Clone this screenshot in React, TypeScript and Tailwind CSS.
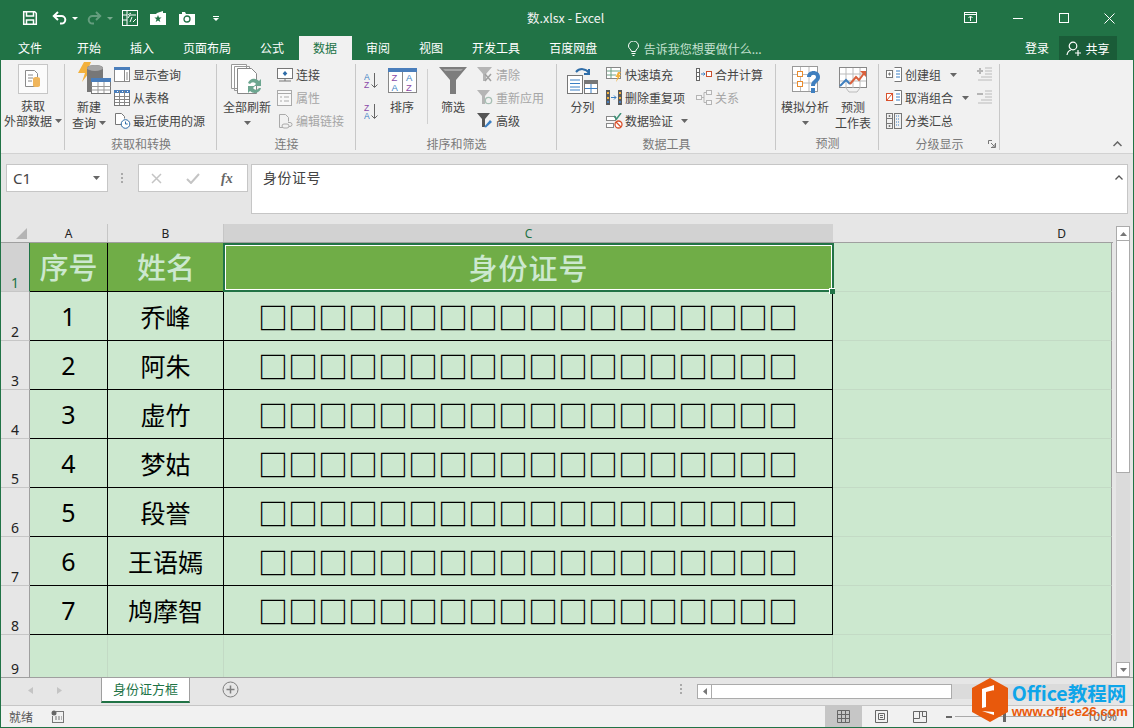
import { ReactNode } from "react";

const cjk = "font-['Noto_Sans_CJK_SC','Noto_Sans',sans-serif]";

type Ic = { className?: string };

const Caret = ({ className = "" }: Ic) => (
  <svg width="7" height="4" viewBox="0 0 7 4" className={className}>
    <path d="M0 0h7L3.500 4z" fill="#666" />
  </svg>
);

// quick access + window icons
const SaveIc = () => (
  <svg width="16" height="16" viewBox="0 0 16 16" fill="none" stroke="#fff" strokeWidth="1.500">
    <path d="M1.700 1.700h11l1.600 1.600v11H1.700z" />
    <path d="M4.500 2v4h7V2M4.500 14.300V10h7v4.300" />
  </svg>
);
const UndoIc = ({ color }: { color: string }) => (
  <svg width="15" height="14" viewBox="0 0 15 14" fill="none" stroke={color} strokeWidth="2">
    <path d="M6 1 1.800 5 6 9M2 5h7.500a3.800 3.800 0 0 1 0 7.600H8" />
  </svg>
);
const QatCaret = () => (
  <svg width="6" height="3" viewBox="0 0 6 3"><path d="M0 0h6L3 3z" fill="#fff" /></svg>
);
const FormIc = () => (
  <svg width="16" height="16" viewBox="0 0 16 16" fill="none" stroke="#fff" strokeWidth="1">
    <rect x="0.500" y="0.500" width="15" height="15" />
    <path d="M5 1v14M1 5h4M1 10h4M14 5H8l-2 3M9 3l-3 2M8 12l2-5M11 12l3-3" />
  </svg>
);
const StarIc = () => (
  <svg width="16" height="14" viewBox="0 0 16 14">
    <path fill="#fff" d="M0 3h6l1-1 6-2v2h3v12H0z" />
    <path fill="#217346" d="m8 4 1 2.600h2.600L9.500 8.300l.8 2.700L8 9.400 5.700 11l.8-2.700-2.100-1.700H7z" />
  </svg>
);
const CameraIc = () => (
  <svg width="16" height="13" viewBox="0 0 16 13">
    <path fill="#fff" d="M0 2h3V0h3l1 2h9v11H0z" />
    <circle cx="8" cy="7" r="3" fill="none" stroke="#217346" strokeWidth="1.300" />
  </svg>
);

// ribbon big icons
const GetDataIc = () => (
  <svg width="20" height="20" viewBox="0 0 20 20">
    <path d="M2.500 1.500h9l3 3v13h-12z" fill="#fff" stroke="#8a8a8a" />
    <path d="M5 6h5M5 9h5M5 12h4" stroke="#888" />
    <path d="M10 9.500c0-2 7-2 7 0v7c0 2-7 2-7 0z" fill="#f0b65c" />
  </svg>
);
const NewQueryIc = () => (
  <svg width="34" height="36" viewBox="0 0 34 36">
    <path d="M7 0h7l-3 7h4L5 20l3-9H1z" fill="#f2b13d" />
    <path d="M10 6c0-4 16-4 16 0v24H10z" fill="#777" />
    <ellipse cx="18" cy="6" rx="8" ry="3" fill="#a5a5a5" />
    <rect x="14.500" y="16.500" width="19" height="15" fill="#fff" stroke="#777" />
    <rect x="14" y="16" width="20" height="4" fill="#4a7ebb" />
    <path d="M14.500 24.500h19M14.500 28h19M21 20v11M27 20v11" stroke="#999" />
  </svg>
);
const ShowQueryIc = () => (
  <svg width="16" height="15" viewBox="0 0 16 15">
    <rect x="0.500" y="0.500" width="15" height="14" fill="#fff" stroke="#888" />
    <rect width="16" height="3" fill="#4a7ebb" />
    <path d="M10.500 3v11M12 6h2M12 8h2M12 10h2M12 12h2" stroke="#888" />
  </svg>
);
const TableIc = () => (
  <svg width="16" height="16" viewBox="0 0 16 16">
    <rect x="0.500" y="0.500" width="15" height="15" fill="#fff" stroke="#777" />
    <rect width="16" height="3" fill="#4a7ebb" />
    <path d="M1 6.500h14M1 9.500h14M1 12.500h14M5.500 1v14M10.500 1v14" stroke="#888" />
    <path d="M3 1.500h1M8 1.500h1M13 1.500h1" stroke="#fff" />
  </svg>
);
const RecentIc = () => (
  <svg width="17" height="17" viewBox="0 0 17 17">
    <path d="M8.500 12.500h-7v-11h6l3 3v2" fill="#fff" stroke="#777" />
    <circle cx="11.500" cy="12" r="4.300" fill="#fff" stroke="#2f6da8" />
    <path d="M11.500 9.500V12h2.200" fill="none" stroke="#2f6da8" />
  </svg>
);
const RefreshAllIc = () => (
  <svg width="32" height="33" viewBox="0 0 32 33">
    <path d="M.5.500h15v24H.5zM3.500 2.500h15v24h-15z" fill="#fff" stroke="#999" />
    <path d="M6.500 4.500h14l5 5v20h-19z" fill="#fff" stroke="#888" />
    <path d="M17 19a6.500 6.500 0 0 1 11-2l2-2v7h-7l2-2a3.500 3.500 0 0 0-6 0zM30 24a6.500 6.500 0 0 1-11 3l-2 2v-7h7l-2 2a3.500 3.500 0 0 0 6 0z" fill="#6da690" />
  </svg>
);
const ConnIc = () => (
  <svg width="16" height="14" viewBox="0 0 16 14">
    <rect x="0.500" y="0.500" width="15" height="10" fill="#fff" stroke="#777" />
    <path d="M8 3l2.300 2.500L8 8 5.700 5.500z" fill="#2f6da8" />
    <path d="M2 13h12M8 10v3" stroke="#777" />
  </svg>
);
const PropsIc = () => (
  <svg width="16" height="16" viewBox="0 0 16 16" fill="none" stroke="#aaa">
    <rect x="0.500" y="0.500" width="14" height="15" fill="#f8f8f8" />
    <path d="M1 3.500h13M3 7h2M7 7h5M3 11h2M7 11h5" />
  </svg>
);
const EditLinkIc = () => (
  <svg width="16" height="16" viewBox="0 0 16 16" fill="none" stroke="#aaa">
    <path d="M6 14.500H2.500v-13h6l3 3v4" />
    <path d="M7 11h3a2 2 0 0 1 0 4H7a2 2 0 0 1 0-4zM11 9.500h2a2 2 0 0 1 0 4h-1" />
  </svg>
);
const AzIc = ({ flip }: { flip?: boolean }) => (
  <svg width="15" height="17" viewBox="0 0 15 17">
    <text x="0" y="7.500" fontSize="8.500" fontFamily="Liberation Sans" fill={flip ? "#8a4aa8" : "#3b7fc4"}>{flip ? "Z" : "A"}</text>
    <text x="0" y="15.500" fontSize="8.500" fontFamily="Liberation Sans" fill={flip ? "#3b7fc4" : "#8a4aa8"}>{flip ? "A" : "Z"}</text>
    <path d="M10.500 1v14M7.500 12.500l3 3 3-3" fill="none" stroke="#666" />
  </svg>
);
const SortIc = () => (
  <svg width="29" height="25" viewBox="0 0 29 25">
    <rect x="0.500" y="0.500" width="28" height="24" fill="#fff" stroke="#888" />
    <rect width="29" height="4" fill="#4a7ebb" />
    <path d="M14.500 4v20" stroke="#888" />
    <text x="3.500" y="13" fontSize="9.500" fontFamily="Liberation Sans" fill="#8a4aa8">Z</text>
    <text x="3.500" y="22.500" fontSize="9.500" fontFamily="Liberation Sans" fill="#3b7fc4">A</text>
    <text x="18" y="13" fontSize="9.500" fontFamily="Liberation Sans" fill="#3b7fc4">A</text>
    <text x="18" y="22.500" fontSize="9.500" fontFamily="Liberation Sans" fill="#8a4aa8">Z</text>
  </svg>
);
const FunnelIc = () => (
  <svg width="28" height="27" viewBox="0 0 28 27">
    <path d="M0 0h28L17 13v14h-6V13z" fill="#7d7d7d" />
    <path d="M4 2h20l-2 2H6z" fill="#a5a5a5" />
  </svg>
);
const ClearIc = () => (
  <svg width="16" height="15" viewBox="0 0 16 15">
    <path d="M0 0h15L9 7v7H6V7z" fill="#b5b5b5" />
    <path d="M8 7l6 7M14 7l-6 7" stroke="#a0a0a0" strokeWidth="1.500" />
  </svg>
);
const ReapplyIc = () => (
  <svg width="16" height="15" viewBox="0 0 16 15">
    <path d="M0 0h13L8 6v8H5V6z" fill="#b5b5b5" />
    <circle cx="11.500" cy="10.500" r="3.200" fill="none" stroke="#a8c0b5" strokeWidth="1.300" />
  </svg>
);
const AdvIc = () => (
  <svg width="16" height="15" viewBox="0 0 16 15">
    <path d="M0 0h13L8 6v8H5V6z" fill="#555" />
    <path d="M7 14l6-7 2 2-6 5.500z" fill="#3b7fc4" />
  </svg>
);
const SplitIc = () => (
  <svg width="31" height="27" viewBox="0 0 31 27">
    <rect x="0.500" y="8.500" width="15" height="18" fill="#fff" stroke="#777" />
    <path d="M3 13h10M3 16.500h10M3 20h10M3 23h10" stroke="#3b7fc4" />
    <rect x="17.500" y="13.500" width="13" height="13" fill="#fff" stroke="#777" />
    <path d="M18 14h12v3H18z" fill="#777" />
    <path d="M24 17v9M18 21.500h12" stroke="#3b7fc4" />
    <path d="M9 5a8 8 0 0 1 13 1M22 2v5h-5" fill="none" stroke="#2f6da8" strokeWidth="2" />
  </svg>
);
const FlashIc = () => (
  <svg width="16" height="15" viewBox="0 0 16 15">
    <rect x="0.500" y="0.500" width="14" height="11" fill="#fff" stroke="#888" />
    <path d="M1 4h13M1 8h9M5 1v10" stroke="#6fa287" />
    <path d="M12 5h3l-2 3h2l-5 7 1.500-5H9.500z" fill="#f2b13d" />
  </svg>
);
const DedupeIc = () => (
  <svg width="16" height="15" viewBox="0 0 16 15">
    <path d="M0 0h4v15H0zM12 0h4v15h-4z" fill="#5b5b5b" />
    <path d="M1 2h2v2H1zM1 7h2v2H1zM13 2h2v2h-2zM13 7h2v2h-2z" fill="#f2b13d" />
    <path d="M1 11h2v2H1zM13 11h2v2h-2z" fill="#4a7ebb" />
    <path d="M5 7.500h5M8 5.500l2 2-2 2" fill="none" stroke="#3b7fc4" />
  </svg>
);
const ValidateIc = () => (
  <svg width="17" height="16" viewBox="0 0 17 16">
    <rect x="0.500" y="3.500" width="9" height="4" fill="#fff" stroke="#888" />
    <rect x="0.500" y="10.500" width="7" height="4" fill="#fff" stroke="#888" />
    <path d="M8 3l2.500 3L15 0" fill="none" stroke="#3f9278" strokeWidth="1.500" />
    <circle cx="12.500" cy="11.500" r="3.500" fill="#fff" stroke="#d9512c" strokeWidth="1.300" />
    <path d="M10 9l5 5" stroke="#d9512c" strokeWidth="1.300" />
  </svg>
);
const MergeIc = () => (
  <svg width="16" height="13" viewBox="0 0 16 13">
    <rect x="0.500" y="0.500" width="3" height="12" fill="#fff" stroke="#666" />
    <path d="M1 4.500h2M1 8.500h2" stroke="#666" />
    <rect x="10.500" y="3.500" width="5" height="5" fill="#fff" stroke="#c9502d" />
    <path d="M5 6h4M7.500 4.500 9 6 7.500 7.500" fill="none" stroke="#3b7fc4" />
  </svg>
);
const RelationIc = () => (
  <svg width="16" height="15" viewBox="0 0 16 15" fill="#f6f6f6" stroke="#b5b5b5">
    <rect x="0.500" y="5.500" width="5" height="4" />
    <rect x="10.500" y="0.500" width="5" height="4" />
    <rect x="10.500" y="10.500" width="5" height="4" />
    <path d="M5.500 7.500h2.500M8 2.500v10M8 2.500h2.500M8 12.500h2.500" fill="none" />
  </svg>
);
const WhatIfIc = () => (
  <svg width="31" height="29" viewBox="0 0 31 29">
    <rect x="0.500" y="0.500" width="25" height="25" fill="#fff" stroke="#999" />
    <path d="M8.500 1v24M17 1v24M1 8.500h24M1 17h24" stroke="#bbb" />
    <rect x="5.500" y="5.500" width="5" height="5" fill="#fff" stroke="#e88b2d" />
    <rect x="5.500" y="15.500" width="5" height="5" fill="#fff" stroke="#e88b2d" />
    <path d="M15 11c0-8 13-8 13 0 0 5-5 5-5 9h-4c0-6 5-6 5-9 0-3-5-3-5 0zM19 22h4v5h-4z" fill="#3f7fbf" />
  </svg>
);
const ForecastIc = () => (
  <svg width="28" height="26" viewBox="0 0 28 26">
    <rect x="0.500" y="0.500" width="27" height="20" fill="#fff" stroke="#888" />
    <path d="M7 1v20M14 1v20M21 1v20M1 7h26M1 14h26" stroke="#bbb" />
    <path d="M1 19l6-6 4 4" fill="none" stroke="#3f7fbf" strokeWidth="2" />
    <path d="M11 17l6-7 3 3 6-8" fill="none" stroke="#d9603c" strokeWidth="2" />
    <path d="M21 4h6v6z" fill="#d9603c" />
    <path d="M7 21l3 4h8l3-4" fill="none" stroke="#bbb" />
  </svg>
);
const OutlineIc = ({ group, red }: { group?: boolean; red?: boolean }) => (
  <svg width="16" height="15" viewBox="0 0 16 15">
    <rect x="0.500" y="3.500" width="6" height="7" fill="#fff" stroke={red ? "#d9512c" : "#777"} />
    {red ? <path d="M1 10l5-6" stroke="#d9512c" /> : <path d="M2 7h3M3.500 5.500v3" stroke="#777" />}
    <path d="M8.500 .5h7v14h-7" fill="#fff" stroke="#777" />
    <path d="M10 4h4M10 7h4M10 10h4" stroke={group ? "#3b7fc4" : "#777"} />
  </svg>
);
const SubtotalIc = () => (
  <svg width="16" height="16" viewBox="0 0 16 16" fill="none" stroke="#777">
    <rect x="0.500" y="0.500" width="6" height="15" />
    <rect x="8.500" y="0.500" width="7" height="15" />
    <path d="M1 5.500h5M1 10.500h5M2.500 3h2M3.500 2v2M2.500 13h2M3.500 12v2" />
    <path d="M10 3h4M10 6h4M10 9h4M10 12h4" stroke="#3b7fc4" strokeDasharray="1 1" />
  </svg>
);
const ShowDetailIc = ({ minus }: { minus?: boolean }) => (
  <svg width="15" height="14" viewBox="0 0 15 14">
    <path d={minus ? "M0 3h6v2H0z" : "M2 1h2v2h2v2H4v2H2V5H0V3h2z"} fill="#b5b5b5" />
    <path d="M8 1h7M8 4h7M8 7h7M4 10h11M1 13h14" stroke="#bbb" />
  </svg>
);

const Large = ({ icon, lines, caret, className = "" }: { icon: ReactNode; lines: string[]; caret?: "inline" | "below"; className?: string }) => (
  <div className={`flex flex-col items-center ${className}`}>
    <div className="flex h-[36px] items-center justify-center">{icon}</div>
    <div className="flex flex-col items-center text-xs leading-[16px] text-[#444] mt-px">
      {lines.map((l, i) => (
        <div key={l} className="flex items-center whitespace-nowrap">
          {l}
          {caret === "inline" && i === lines.length - 1 && <Caret className="ml-[3px]" />}
        </div>
      ))}
      {caret === "below" && <Caret className="mt-[6px]" />}
    </div>
  </div>
);

const Small = ({ icon, label, off, caret }: { icon: ReactNode; label: string; off?: boolean; caret?: string }) => (
  <div className={`flex h-[23px] items-center text-xs whitespace-nowrap ${off ? "text-[#a6a6a6]" : "text-[#444]"}`}>
    <div className="flex w-[19px] shrink-0 items-center">{icon}</div>
    {label}
    {caret && <Caret className={caret} />}
  </div>
);

const Group = ({ label, className, children, launcher }: { label: string; className: string; children: ReactNode; launcher?: boolean }) => (
  <div className={`relative flex shrink-0 flex-col ${className}`}>
    <div className="flex h-[70px]">{children}</div>
    <div className="flex-1 text-center text-xs leading-[24px] text-[#7a7a7a]">{label}</div>
    <div className="absolute right-0 top-[2px] bottom-[3px] w-px bg-[#c8c8c8]" />
    {launcher && (
      <svg width="8" height="8" viewBox="0 0 8 8" className="absolute right-[4px] bottom-[5px]" fill="none" stroke="#777">
        <path d="M.5 4V.5H4M7.500 3v4.500H3M3 3l3 3M7 4v3H4" />
      </svg>
    )}
  </div>
);

const Col = ({ className = "", children }: { className?: string; children: ReactNode }) => (
  <div className={`flex flex-col pt-px ${className}`}>{children}</div>
);

const UndoRedo = () => (
  <div className="flex w-[15px] scale-x-[-1] opacity-30"><UndoIc color="#fff" /></div>
);

const TitleBar = () => (
  <div className="relative flex h-[36px] items-center bg-[#217346] text-white">
    <div className="flex items-center">
      <div className="ml-[21px] w-[30px]"><SaveIc /></div>
      <div className="flex w-[20px]"><UndoIc color="#fff" /></div>
      <QatCaret />
      <div className="ml-[9px]"><UndoRedo /></div>
      <div className="ml-[5px] opacity-40"><QatCaret /></div>
      <div className="ml-[9px]"><FormIc /></div>
      <div className="ml-[12px]"><StarIc /></div>
      <div className="ml-[13px]"><CameraIc /></div>
      <div className="ml-[18px] flex flex-col items-center gap-px">
        <div className="h-px w-[6px] bg-white" />
        <QatCaret />
      </div>
    </div>
    <div className="flex-1" />
    <div className={`absolute left-[526px] top-[9px] text-[12.500px] leading-[18px] whitespace-nowrap text-[#f2f2f2] ${cjk}`}>数.xlsx - Excel</div>
    <div className="flex items-center">
      <svg width="14" height="12" viewBox="0 0 14 12" fill="none" stroke="#fff" className="mr-[35px]">
        <rect x="0.500" y="0.500" width="12" height="10" />
        <path d="M1 2.500h11M6.500 9V4.500M4.500 6l2-2 2 2" />
      </svg>
      <div className="mr-[36px] h-px w-[10px] bg-white" />
      <div className="mr-[35px] h-[10px] w-[10px] border border-white" />
      <svg width="11" height="11" viewBox="0 0 11 11" stroke="#fff" className="mr-[18px]"><path d="M.5.500l10 10M10.500.500l-10 10" /></svg>
    </div>
  </div>
);

const tabs = ["开始", "插入", "页面布局", "公式", "数据", "审阅", "视图", "开发工具", "百度网盘"];

const TabBar = () => (
  <div className="flex h-[24px] items-stretch bg-[#217346] text-xs leading-[23px] text-white">
    <div className="w-[61.500px] pl-[17px]">文件</div>
    {tabs.map((t) => (
      <div key={t} className={`px-[14.500px] whitespace-nowrap ${t === "数据" ? "bg-[#f1f1f1] text-[#217346]" : ""}`}>{t}</div>
    ))}
    <div className="ml-[16px] flex items-center">
      <svg width="11" height="15" viewBox="0 0 11 15" fill="none" stroke="#fff" className="mr-[5px]">
        <path d="M3.500 10.500C3 8 .5 7.500.5 5a5 5 0 0 1 10 0c0 2.500-2.500 3-3 5.500zM3.500 12.500h4M4.500 14.500h2" />
      </svg>
      <span className="text-[#c3e0cf]">告诉我您想要做什么...</span>
    </div>
    <div className="flex-1" />
    <div className="mr-[10px]">登录</div>
    <div className="mr-[16px] flex w-[58px] items-center justify-center gap-[3px] bg-[#1a5c38]">
      <svg width="16" height="15" viewBox="0 0 16 15" fill="none" stroke="#fff" strokeWidth="1.200">
        <circle cx="7" cy="5" r="3.800" />
        <path d="M1 14c.5-3 2-4.500 4-5M9 12h6M12 9v6" />
      </svg>
      共享
    </div>
  </div>
);

const Ribbon = () => (
  <div className="relative flex h-[94px] bg-[#f1f1f1] pt-[2px] border-b border-[#d2d2d2]">
    <Group label="" className="w-[64px]">
      <div className="flex w-full flex-col items-center">
        <div className="flex h-[30px] w-[30px] mt-[2px] items-center justify-center border border-[#c6c6c6] bg-[#fbfbfb]"><GetDataIc /></div>
        <div className="mt-[4px] flex flex-col items-center text-xs leading-[15px] text-[#444] whitespace-nowrap">
          <div>获取</div>
          <div className="flex items-center">外部数据<Caret className="ml-[3px]" /></div>
        </div>
      </div>
    </Group>
    <Group label="获取和转换" className="w-[152px]">
      <Large className="w-[48px]" icon={<div className="ml-[9px]"><NewQueryIc /></div>} lines={["新建", "查询"]} caret="inline" />
      <Col className="ml-[1px]">
        <Small icon={<ShowQueryIc />} label="显示查询" />
        <Small icon={<TableIc />} label="从表格" />
        <Small icon={<RecentIc />} label="最近使用的源" />
      </Col>
    </Group>
    <Group label="连接" className="w-[139px]">
      <Large className="ml-[6px] w-[48px]" icon={<RefreshAllIc />} lines={["全部刷新"]} caret="below" />
      <Col className="ml-[6px]">
        <Small icon={<ConnIc />} label="连接" />
        <Small icon={<PropsIc />} label="属性" off />
        <Small icon={<EditLinkIc />} label="编辑链接" off />
      </Col>
    </Group>
    <Group label="排序和筛选" className="w-[201px]">
      <div className="ml-[8px] flex w-[15px] flex-col gap-[14px] pt-[10px]">
        <AzIc />
        <AzIc flip />
      </div>
      <Large className="ml-[8px] w-[30px]" icon={<SortIc />} lines={["排序"]} />
      <div className="ml-[10px] mt-[7px] h-[55px] w-px bg-[#d0d0d0]" />
      <Large className="ml-[11px] w-[28px]" icon={<FunnelIc />} lines={["筛选"]} />
      <Col className="ml-[10px]">
        <Small icon={<ClearIc />} label="清除" off />
        <Small icon={<ReapplyIc />} label="重新应用" off />
        <Small icon={<AdvIc />} label="高级" />
      </Col>
    </Group>
    <Group label="数据工具" className="w-[219px]">
      <Large className="ml-[10px] w-[31px]" icon={<SplitIc />} lines={["分列"]} />
      <Col className="ml-[8px] w-[90px]">
        <Small icon={<FlashIc />} label="快速填充" />
        <Small icon={<DedupeIc />} label="删除重复项" />
        <Small icon={<ValidateIc />} label="数据验证" caret="ml-[8px]" />
      </Col>
      <Col>
        <Small icon={<MergeIc />} label="合并计算" />
        <Small icon={<RelationIc />} label="关系" off />
      </Col>
    </Group>
    <Group label="预测" className="w-[103px]">
      <Large className="ml-[5px] w-[48px]" icon={<div className="ml-[4px]"><WhatIfIc /></div>} lines={["模拟分析"]} caret="below" />
      <Large className="w-[48px]" icon={<ForecastIc />} lines={["预测", "工作表"]} />
    </Group>
    <Group label="分级显示" className="w-[121px]" launcher>
      <Col className="ml-[7px] w-[91px]">
        <Small icon={<OutlineIc group />} label="创建组" caret="ml-[9px]" />
        <Small icon={<OutlineIc red group />} label="取消组合" caret="ml-[9px]" />
        <Small icon={<SubtotalIc />} label="分类汇总" />
      </Col>
      <div className="flex flex-col gap-[9px] pt-[5px]">
        <ShowDetailIc />
        <ShowDetailIc minus />
      </div>
    </Group>
    <svg width="9" height="6" viewBox="0 0 9 6" fill="none" stroke="#666" strokeWidth="1.500" className="absolute right-[11px] bottom-[6px]">
      <path d="M.5 5l4-4 4 4" />
    </svg>
  </div>
);

const FormulaBar = () => (
  <div className="flex h-[70px] items-start bg-[#e6e6e6] pt-[10px] pl-[5px] pr-[5px]">
    <div className="flex h-[28px] w-[102px] items-center justify-between border border-[#c6c6c6] bg-white pl-[6px] pr-[7px] font-['Noto_Sans',sans-serif] text-[15px] text-[#444]">
      C1
      <Caret />
    </div>
    <div className="ml-[13px] flex w-[3px] flex-col gap-[2px] pt-[9px]">
      <div className="h-[2px] w-[2px] bg-[#aaa]" />
      <div className="h-[2px] w-[2px] bg-[#aaa]" />
      <div className="h-[2px] w-[2px] bg-[#aaa]" />
    </div>
    <div className="ml-[14px] flex h-[28px] w-[110px] items-center border border-[#c6c6c6] bg-white">
      <svg width="11" height="11" viewBox="0 0 11 11" stroke="#c4c4c4" strokeWidth="1.500" className="ml-[12px]"><path d="M1 1l9 9M10 1l-9 9" /></svg>
      <svg width="14" height="11" viewBox="0 0 14 11" fill="none" stroke="#c4c4c4" strokeWidth="2" className="ml-[24px]"><path d="M1 6l4 4 8-9" /></svg>
      <span className="ml-[21px] font-['Liberation_Serif',serif] text-[14px] font-bold italic text-[#666]">fx</span>
    </div>
    <div className="relative ml-[3px] h-[50px] flex-1 border border-[#c6c6c6] bg-white pl-[11px] text-[14px] leading-[24px] tracking-[0.500px] text-[#444]">
      身份证号
      <svg width="8" height="5" viewBox="0 0 8 5" fill="none" stroke="#555" strokeWidth="1.300" className="absolute right-[4px] top-[10px]"><path d="M.5 4.500 4 1l3.500 3.500" /></svg>
    </div>
  </div>
);

const people = [
  ["1", "乔峰"],
  ["2", "阿朱"],
  ["3", "虚竹"],
  ["4", "梦姑"],
  ["5", "段誉"],
  ["6", "王语嫣"],
  ["7", "鸠摩智"],
];

const boxes = "□".repeat(18);

const RowHead = ({ n, sel, last }: { n: number; sel?: boolean; last?: boolean }) => (
  <div className={`flex w-[29px] shrink-0 items-end justify-center border-r font-['Noto_Sans',sans-serif] text-[14px] leading-[17px] ${last ? "" : "border-b border-b-[#c6c6c6]"} ${sel ? "border-r-[#217346] bg-[#d2d2d2] text-[#217346]" : "border-r-[#9f9f9f] bg-[#e6e6e6] text-[#222]"}`}>
    {n}
  </div>
);

const Sheet = () => (
  <div className="flex flex-1 overflow-hidden bg-[#e6e6e6]">
    <div className="flex w-[1112px] shrink-0 flex-col">
      {/* column letters */}
      <div className="flex h-[18px] font-['Noto_Sans',sans-serif] text-[12px] leading-[19px] text-[#222]">
        <div className="flex w-[29px] items-end justify-end pr-[3px] pb-[3px]">
          <svg width="11" height="11" viewBox="0 0 11 11"><path d="M11 0v11H0z" fill="#b4b4b4" /></svg>
        </div>
        <div className="w-[78px] border-r border-[#c6c6c6] text-center">A</div>
        <div className="w-[116px] border-r border-[#c6c6c6] text-center">B</div>
        <div className="w-[609px] bg-[#d2d2d2] text-center text-[#217346]">C</div>
        <div className="w-[279px] pr-[46px] text-right">D</div>
      </div>
      {/* header row */}
      <div className="flex h-[50px] border-t border-[#9f9f9f]">
        <RowHead n={1} sel />
        <div className={`flex w-[78px] items-center justify-center border-r border-b border-black bg-[#70ad47] text-[29px] font-medium text-[#cce8cf] ${cjk}`}>序号</div>
        <div className={`flex w-[115px] items-center justify-center border-b border-black bg-[#70ad47] pl-px text-[29px] font-medium text-[#cce8cf] ${cjk}`}>姓名</div>
        <div className={`relative flex w-[611px] items-center justify-center border-2 border-[#217346] bg-[#70ad47] text-[29px] font-medium tracking-[1px] text-[#cce8cf] ${cjk}`}>
          <div className="absolute inset-0 border border-white" />
          身份证号
          <div className="absolute right-[-3px] bottom-[-4px] h-[6px] w-[6px] border-l border-t border-white bg-[#217346]" />
        </div>
        <div className="w-[278px] border-r border-b border-r-[#9f9f9f] border-b-[#c3dac5] bg-[#cce8cf]" />
      </div>
      {/* data rows */}
      {people.map(([n, name], i) => (
        <div key={n} className="flex h-[49px]">
          <RowHead n={i + 2} />
          <div className="flex w-[78px] items-center justify-center border-r border-b border-black bg-[#cce8cf] pt-px font-['Noto_Sans',sans-serif] text-[25px] text-black">{n}</div>
          <div className={`flex w-[116px] items-center justify-center border-r border-b border-black bg-[#cce8cf] pt-px text-[25px] text-black ${cjk}`}>{name}</div>
          <div className={`flex w-[609px] items-center justify-center border-r border-b border-black bg-[#cce8cf] text-[30px] font-medium leading-none text-black whitespace-nowrap ${cjk}`}>{boxes}</div>
          <div className="w-[279px] border-r border-b border-r-[#9f9f9f] border-b-[#c3dac5] bg-[#cce8cf]" />
        </div>
      ))}
      {/* row 9, cut by the tab strip */}
      <div className="flex flex-1">
        <RowHead n={9} last />
        <div className="w-[78px] border-r border-[#c3dac5] bg-[#cce8cf]" />
        <div className="w-[116px] border-r border-[#c3dac5] bg-[#cce8cf]" />
        <div className="w-[609px] border-r border-[#c3dac5] bg-[#cce8cf]" />
        <div className="w-[279px] border-r border-[#9f9f9f] bg-[#cce8cf]" />
      </div>
    </div>
    {/* vertical scrollbar */}
    <div className="ml-[3px] mr-[3px] flex w-[15px] flex-col pt-[2px]">
      <div className="flex h-[15px] items-center justify-center border border-[#ababab] bg-white">
        <svg width="7" height="4" viewBox="0 0 7 4"><path d="M3.500 0 7 4H0z" fill="#777" /></svg>
      </div>
      <div className="h-[232px] border-x border-b border-[#ababab] bg-white" />
      <div className="flex-1 bg-[#dbdbdb]" />
      <div className="flex h-[15px] items-center justify-center border border-[#ababab] bg-white">
        <svg width="7" height="4" viewBox="0 0 7 4"><path d="M0 0h7L3.500 4z" fill="#777" /></svg>
      </div>
    </div>
  </div>
);

const SheetTabs = () => (
  <div className="flex h-[28px] border-t border-[#9f9f9f] bg-[#e6e6e6]">
    <svg width="5" height="7" viewBox="0 0 5 7" className="ml-[27px] mt-[9px]"><path d="M5 0v7L0 3.500z" fill="#c4c4c4" /></svg>
    <svg width="5" height="7" viewBox="0 0 5 7" className="ml-[24px] mt-[9px]"><path d="M0 0v7l5-3.500z" fill="#c4c4c4" /></svg>
    <div className="ml-[39px] flex h-[25px] w-[89px] justify-center border-x border-b-2 border-x-[#9f9f9f] border-b-[#217346] bg-white text-[13px] leading-[22px] text-[#217346]">身份证方框</div>
    <svg width="17" height="17" viewBox="0 0 17 17" fill="none" stroke="#7f7f7f" className="ml-[32px] mt-[3px]">
      <circle cx="8.500" cy="8.500" r="7.500" />
      <path d="M4.500 8.500h8M8.500 4.500v8" strokeWidth="1.500" />
    </svg>
    <div className="ml-[441px] mt-[6px] flex flex-col gap-[2px]">
      <div className="h-[2px] w-[2px] bg-[#aaa]" />
      <div className="h-[2px] w-[2px] bg-[#aaa]" />
      <div className="h-[2px] w-[2px] bg-[#aaa]" />
    </div>
    <div className="ml-[15px] mt-[6px] flex h-[15px] w-[414px] bg-[#dbdbdb]">
      <div className="flex w-[15px] items-center justify-center border border-[#ababab] bg-white">
        <svg width="4" height="7" viewBox="0 0 4 7"><path d="M4 0v7L0 3.500z" fill="#777" /></svg>
      </div>
      <div className="w-[240px] border-y border-r border-[#ababab] bg-white" />
    </div>
  </div>
);

const StatusBar = () => (
  <div className="relative flex h-[22px] items-center border-t border-[#c6c6c6] bg-[#f1f1f1] text-xs text-[#555]">
    <span className="ml-[8px]">就绪</span>
    <svg width="13" height="13" viewBox="0 0 13 13" className="ml-[18px]">
      <circle cx="3" cy="3" r="2.500" fill="#666" />
      <path d="M5 1h8v12H1V6h1v6h10V2H5z" fill="#777" />
      <path d="M4 7h2M7 7h2M10 7h1M4 9h2M7 9h2M10 9h1" stroke="#777" />
    </svg>
    <div className="flex-1" />
    <div className="flex h-full w-[37px] items-center justify-center bg-[#c6c6c6]">
      <svg width="13" height="13" viewBox="0 0 13 13" fill="none" stroke="#666">
        <path d="M.5.500h12v12H.5zM4.500.500v12M8.500.500v12M.5 4.500h12M.5 8.500h12" />
      </svg>
    </div>
    <svg width="13" height="13" viewBox="0 0 13 13" fill="none" stroke="#666" className="ml-[13px]">
      <path d="M.5.500h12v12H.5zM3.500 3.500h6v6h-6zM5 5.500h3M5 7.500h3" />
    </svg>
    <svg width="14" height="12" viewBox="0 0 14 12" fill="none" stroke="#666" className="ml-[25px]">
      <path d="M.5.500h13v11H.5zM.5 7.500h6v-7M9.500.500v5h4" />
    </svg>
    <div className="ml-[19px] h-[2px] w-[6px] bg-[#666]" />
    <div className="relative ml-[3px] h-px w-[98px] bg-[#aaa]">
      <div className="absolute left-[48px] top-[-6px] h-[12px] w-[3px] bg-[#666]" />
    </div>
    <div className="ml-[6px] text-[14px] text-[#666]">+</div>
    <div className="ml-[20px] mr-[16px] font-['Noto_Sans',sans-serif] text-[12px] text-[#666]">100%</div>
  </div>
);

export default function App() {
  return (
    <div className={`relative flex h-[728px] w-[1134px] flex-col overflow-hidden border-x border-b border-[#217346] ${cjk}`}>
      <TitleBar />
      <TabBar />
      <Ribbon />
      <FormulaBar />
      <Sheet />
      <SheetTabs />
      <StatusBar />
      {/* site watermark over the corner */}
      <div className="absolute right-[5px] bottom-[5px] flex items-center">
        <svg width="36" height="44" viewBox="0 0 36 44">
          <path d="M18 0 36 10v24L18 44 0 34V10z" fill="#e8590c" />
          <path d="M10 11 22 7v30l-12-4 12 1V12l-8 2v15l-4 1z" fill="#fff" />
        </svg>
        <div className="ml-[4px] flex flex-col font-['Liberation_Sans',sans-serif] font-bold">
          <div className={`text-[19.500px] leading-[23px] text-[#0ea5e9] ${cjk}`}>Office教程网</div>
          <div className="text-[13.400px] leading-[16px] text-[#ea5a0c]">www.office26.com</div>
        </div>
      </div>
    </div>
  );
}
